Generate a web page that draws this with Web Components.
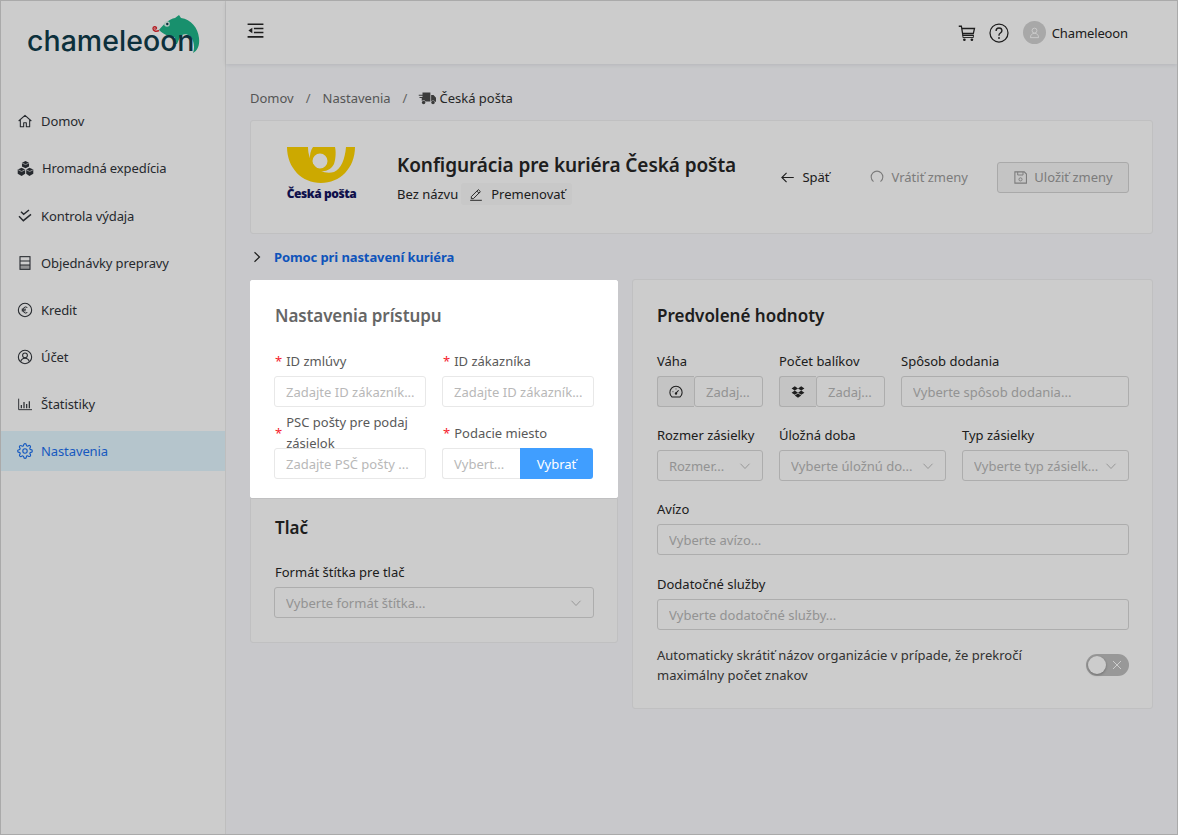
<!DOCTYPE html>
<html lang="sk"><head><meta charset="utf-8"><title>Chameleoon</title>
<style>html,body{margin:0;height:100%;background:#fafbfe}body{font-family:"Noto Sans",sans-serif;font-size:13px;color:#262626}</style>
</head><body>
<cr-app>
  <cr-sidebar slot="side">
    <cr-logo></cr-logo>
    <cr-nav-item icon="home">Domov</cr-nav-item>
    <cr-nav-item icon="cubes" wide>Hromadná expedícia</cr-nav-item>
    <cr-nav-item icon="checks">Kontrola výdaja</cr-nav-item>
    <cr-nav-item icon="orders">Objednávky prepravy</cr-nav-item>
    <cr-nav-item icon="euro">Kredit</cr-nav-item>
    <cr-nav-item icon="account">Účet</cr-nav-item>
    <cr-nav-item icon="stats">Štatistiky</cr-nav-item>
    <cr-nav-item icon="gear" active>Nastavenia</cr-nav-item>
  </cr-sidebar>
  <cr-topbar slot="top"></cr-topbar>
  <cr-breadcrumb></cr-breadcrumb>
  <cr-courier-head></cr-courier-head>
  <cr-help-row>Pomoc pri nastavení kuriéra</cr-help-row>
  <cr-columns>
    <div slot="left">
      <cr-card spot heading="Nastavenia prístupu">
        <cr-grid cols="152px 152px">
          <cr-field label="ID zmlúvy" required tight><cr-input text="Zadajte ID zákazník..."></cr-input></cr-field>
          <cr-field label="ID zákazníka" required tight><cr-input text="Zadajte ID zákazník..."></cr-input></cr-field>
          <cr-field label="PSC pošty pre podaj zásielok" required last><cr-input text="Zadajte PSČ pošty ..."></cr-input></cr-field>
          <cr-field label="Podacie miesto" required last><cr-picker text="Vybert..." action="Vybrať"></cr-picker></cr-field>
        </cr-grid>
      </cr-card>
      <cr-card heading="Tlač" compact>
        <cr-field label="Formát štítka pre tlač" last indent><cr-input select text="Vyberte formát štítka..."></cr-input></cr-field>
      </cr-card>
    </div>
    <cr-card slot="right" heading="Predvolené hodnoty" wide>
      <cr-grid cols="106px 106px 228px">
        <cr-field label="Váha"><cr-input addon="gauge" text="Zadaj..."></cr-input></cr-field>
        <cr-field label="Počet balíkov"><cr-input addon="dropbox" text="Zadaj..."></cr-input></cr-field>
        <cr-field label="Spôsob dodania"><cr-input text="Vyberte spôsob dodania..."></cr-input></cr-field>
      </cr-grid>
      <cr-grid cols="106px 167px 167px">
        <cr-field label="Rozmer zásielky"><cr-input select text="Rozmer..."></cr-input></cr-field>
        <cr-field label="Úložná doba"><cr-input select text="Vyberte úložnú do..."></cr-input></cr-field>
        <cr-field label="Typ zásielky"><cr-input select text="Vyberte typ zásielk..."></cr-input></cr-field>
      </cr-grid>
      <cr-field label="Avízo" extra><cr-input text="Vyberte avízo..."></cr-input></cr-field>
      <cr-field label="Dodatočné služby"><cr-input text="Vyberte dodatočné služby..."></cr-input></cr-field>
      <cr-switch-row>Automaticky skrátiť názov organizácie v prípade, že prekročí maximálny počet znakov</cr-switch-row>
    </cr-card>
  </cr-columns>
</cr-app>
<script>
const ICONS={
 home:'<path d="M2.500 12 12 3.500l9.500 8.500M5 10v10.500h5v-6h4v6h5V10" fill="none" stroke="currentColor" stroke-width="1.600" stroke-linejoin="round"/>',
 cubes:'<g fill="currentColor"><path d="M12 1.500 17 4v5l-5 2.500L7 9V4z"/><path d="M6.500 11 11.500 13.500v6L6.500 22.500 1 19.500v-6z"/><path d="M17.500 11 23 13.500v6l-5.500 3L13 19.500v-6z"/></g><g fill="none" stroke="#fff" stroke-width=".9"><path d="M7 4.200l5 2.300 5-2.300M1.500 13.700l5 2.500 5-2.500M13 13.700l5 2.500 5-2.500"/></g>',
 checks:'<path d="M6 5.500 10 9.500 18 3M3 12.500 9.500 19 21 9.500" fill="none" stroke="currentColor" stroke-width="2.200"/>',
 orders:'<rect x="4.500" y="2.500" width="15" height="19" fill="none" stroke="currentColor" stroke-width="1.600"/><path d="M4.500 9h15M4.500 15h15" stroke="currentColor" stroke-width="1.600"/><path d="M4.500 15h15v6.500h-15z" fill="currentColor" opacity=".35"/>',
 euro:'<circle cx="12" cy="12" r="10" fill="none" stroke="currentColor" stroke-width="1.600"/><path d="M15.500 8.200a4.500 4.500 0 1 0 0 7.600M7 10.800h6.500M7 13.200h6" fill="none" stroke="currentColor" stroke-width="1.500"/>',
 account:'<circle cx="12" cy="12" r="10" fill="none" stroke="currentColor" stroke-width="1.600"/><circle cx="12" cy="9.500" r="3.600" fill="none" stroke="currentColor" stroke-width="1.600"/><path d="M5.500 19c1-3.500 3.500-5 6.500-5s5.500 1.500 6.500 5" fill="none" stroke="currentColor" stroke-width="1.600"/>',
 stats:'<path d="M2.500 4v16.500h20" fill="none" stroke="currentColor" stroke-width="1.400"/><path d="M6.500 13.500v5M10.500 9v9.500M14.500 12v6.500M18.500 8v10.500" stroke="currentColor" stroke-width="1.800"/>',
 gear:'<circle cx="12" cy="12" r="3.300" fill="none" stroke="currentColor" stroke-width="1.700"/><path fill="none" stroke="currentColor" stroke-width="1.700" d="M19.400 15a1.650 1.650 0 0 0 .33 1.820l.06.06a2 2 0 0 1 0 2.830 2 2 0 0 1-2.830 0l-.06-.06a1.650 1.650 0 0 0-1.820-.33 1.650 1.650 0 0 0-1 1.510V21a2 2 0 0 1-2 2 2 2 0 0 1-2-2v-.09A1.650 1.650 0 0 0 9 19.400a1.650 1.650 0 0 0-1.820.33l-.06.06a2 2 0 0 1-2.830 0 2 2 0 0 1 0-2.830l.06-.06a1.650 1.650 0 0 0 .33-1.820 1.650 1.650 0 0 0-1.510-1H3a2 2 0 0 1-2-2 2 2 0 0 1 2-2h.09A1.650 1.650 0 0 0 4.600 9a1.650 1.650 0 0 0-.33-1.820l-.06-.06a2 2 0 0 1 0-2.830 2 2 0 0 1 2.830 0l.06.06a1.650 1.650 0 0 0 1.820.33H9a1.650 1.650 0 0 0 1-1.510V3a2 2 0 0 1 2-2 2 2 0 0 1 2 2v.09a1.650 1.650 0 0 0 1 1.510 1.650 1.650 0 0 0 1.820-.33l.06-.06a2 2 0 0 1 2.830 0 2 2 0 0 1 0 2.830l-.06.06a1.650 1.650 0 0 0-.33 1.820V9a1.650 1.650 0 0 0 1.510 1H21a2 2 0 0 1 2 2 2 2 0 0 1-2 2h-.09a1.650 1.650 0 0 0-1.510 1z"/>',
 menu:'<path d="M2 4h20M10 9.500h12M10 14.500h12M2 20h20" stroke="currentColor" stroke-width="2"/><path d="M3 12l5-3.500v7z" fill="currentColor"/>',
 cart:'<path d="M1 3h3.500l2 12h14.500M5 6h17l-1.500 6.500H6.200" fill="none" stroke="currentColor" stroke-width="1.700"/><path d="M6.500 15v3h14v-3" fill="none" stroke="currentColor" stroke-width="1.200"/><circle cx="8.500" cy="21" r="1.800" fill="currentColor"/><circle cx="18.500" cy="21" r="1.800" fill="currentColor"/>',
 help:'<circle cx="12" cy="12" r="10.800" fill="none" stroke="currentColor" stroke-width="1.500"/><path d="M8.500 9.500c0-2.200 1.600-3.500 3.500-3.500s3.500 1.300 3.500 3.300c0 2.700-3.500 2.700-3.500 5.200v.7" fill="none" stroke="currentColor" stroke-width="1.600"/><circle cx="12" cy="18" r="1.100" fill="currentColor"/>',
 user:'<circle cx="12" cy="8.500" r="4.500" fill="none" stroke="currentColor" stroke-width="1.700"/><path d="M4.500 21.500c0-5 3-8 7.500-8s7.500 3 7.500 8z" fill="none" stroke="currentColor" stroke-width="1.700"/>',
 truck:'<g fill="currentColor"><path d="M6 4.500h10.500v12H10a3 3 0 0 0-5-.5V12H2v-1.500h4V9H1V7.500h5z"/><path d="M17.500 8h3.200L24 11.500V17h-1.500a3 3 0 0 0-5-.5z"/><circle cx="7.500" cy="18" r="2.300"/><circle cx="20" cy="18" r="2.300"/></g>',
 pencil:'<path d="M4 16.500 16 4.500l3.500 3.500-12 12H4zM13.500 7l3.500 3.500" fill="none" stroke="currentColor" stroke-width="1.600"/><path d="M2 22.800h20" stroke="currentColor" stroke-width="1.600"/>',
 back:'<path d="M22 12H3M10.500 4.500 3 12l7.500 7.500" fill="none" stroke="currentColor" stroke-width="1.800"/>',
 undo:'<path d="M6 20C3.500 18 2 15 2 12 2 6.500 6.500 2 12 2s10 4.500 10 10c0 3-1.500 6-4 8" fill="none" stroke="currentColor" stroke-width="1.900"/>',
 save:'<path d="M3 3h15l3.500 3.500V21H3z" fill="none" stroke="currentColor" stroke-width="1.700"/><path d="M7.500 3v5h8.500V3" fill="none" stroke="currentColor" stroke-width="1.500"/><circle cx="12" cy="15" r="2.500" fill="none" stroke="currentColor" stroke-width="1.500"/>',
 gauge:'<path d="M5 20.500A10.500 10.500 0 1 1 19 20.500z" fill="none" stroke="currentColor" stroke-width="1.800"/><path d="M12 14l4.500-5" stroke="currentColor" stroke-width="1.800"/><circle cx="12" cy="14.500" r="2" fill="currentColor"/><path d="M6 11.500h1.500M12 6v1.500" stroke="currentColor" stroke-width="1.500"/>',
 dropbox:'<path fill="currentColor" d="M6.500 2 12 5.800 6.500 9.500 1 5.800zM17.500 2 23 5.800l-5.500 3.700L12 5.800zM1 13.200l5.500-3.700 5.500 3.700-5.500 3.700zM17.500 9.500l5.500 3.700-5.500 3.700L12 13.200zM6.500 18.200 12 14.500l5.500 3.700L12 22z"/>',
 down:'<path d="M3 7.500 12 17l9-9.500" fill="none" stroke="currentColor" stroke-width="1.500"/>',
 right:'<path d="M7 2.500l10 9.500-10 9.500" fill="none" stroke="currentColor" stroke-width="2.400"/>',
 cross:'<path d="M4 4l16 16M20 4 4 20" stroke="currentColor" stroke-width="2"/>'
};
function def(name,css,html,extra){
  const tpl=document.createElement('template');
  tpl.innerHTML='<style>*{box-sizing:border-box}:host{box-sizing:border-box}'+css+'</style>'+html;
  customElements.define(name,class extends HTMLElement{
    constructor(){super();this.attachShadow({mode:'open'}).appendChild(tpl.content.cloneNode(true));}
    connectedCallback(){if(extra)extra.call(this,this.shadowRoot);}
  });
}
def('cr-icon',':host{display:inline-flex;flex:none;width:var(--s,16px);height:var(--s,16px)}svg{width:100%;height:100%;display:block}','<svg viewBox="0 0 24 24"></svg>',function(r){
  const n=this.getAttribute('name'); if(n) r.querySelector('svg').innerHTML=ICONS[n]||'';
});
def('cr-app',`:host{display:grid;grid-template-columns:225px 1fr;grid-template-rows:63px 1fr;width:1178px;height:835px;border:1px solid #aaa;overflow:hidden;background:#fafbfe}
 ::slotted([slot=side]){grid-row:1/3}
 main{padding:23px 24px 0;min-width:0}`,'<slot name="side"></slot><slot name="top"></slot><main><slot></slot></main>');
def('cr-sidebar',':host{display:flex;flex-direction:column;background:#fff;border-right:1px solid #eee}','<slot></slot>');
def('cr-logo',`:host{display:block;position:relative;height:100px;flex:none}
 svg{position:absolute;left:143px;top:9px;width:65px;height:50px}
 span{position:absolute;left:26px;top:22px;font:500 28.5px/36px Inter,sans-serif;letter-spacing:.02px;color:#0f3d4c}`,
 `<svg viewBox="0 0 65 50"><path fill="#1fb589" d="M15 20C20 14 25 9 31 8L35 5 37 8C47 9 54 18 55 28 56 36 53 41 49 43 51 38 50 30 46 26 42 23 38 24 36 27L33 34H30L31 27C27 27 20 25 15 20Z"/><circle cx="23" cy="14" r="2.800" fill="#dff5ee"/><circle cx="23.300" cy="14" r="1.200" fill="#0f3d4c"/><path d="M15 20.500C12 22 9 21 9 18.500 9 16.500 12 16 12.500 18 12.500 19.500 10.500 19.500 10.800 18.300" fill="none" stroke="#e3262e" stroke-width="1.400"/></svg><span>chameleoon</span>`);
def('cr-nav-item',`:host{display:flex;align-items:center;gap:8px;height:40px;margin-bottom:7px;padding-left:16px;font-size:13px;letter-spacing:-.1px;color:#30343a}
 :host([wide]){margin-bottom:8px} :host([wide]) cr-icon{--s:17px}
 :host([active]){background:#e3f7ff;color:#1c70f0}`,'<cr-icon></cr-icon><span><slot></slot></span>',function(r){
  r.querySelector('cr-icon').shadowRoot.querySelector('svg').innerHTML=ICONS[this.getAttribute('icon')];
});
def('cr-topbar',`:host{display:flex;align-items:center;height:63px;background:#fff;box-shadow:0 1px 4px rgba(0,21,41,.1);padding:0 49px 0 20px;font-size:13px;color:#262626}
 .m{--s:19px;margin-top:-4px} .r{margin-left:auto;display:flex;align-items:center}
 .c{--s:18px} .h{--s:20px;margin-left:13px} .a{width:23px;height:23px;border-radius:50%;background:#d2d2d2;color:#fff;display:flex;align-items:center;justify-content:center;margin-left:14px;--s:13px}
 .n{margin-left:6px;letter-spacing:-.12px}`,
 `<cr-icon class="m" name="menu"></cr-icon><div class="r"><cr-icon class="c" name="cart"></cr-icon><cr-icon class="h" name="help"></cr-icon><div class="a"><cr-icon name="user"></cr-icon></div><span class="n">Chameleoon</span></div>`);
def('cr-breadcrumb',`:host{display:flex;align-items:center;height:22px;margin-bottom:11px;font-size:13px;color:#6b6b6b}
 i{font-style:normal;margin:0 12px;color:#7a7a7a} i.b2{margin-right:11px} b{font-weight:400;color:#303030} cr-icon{--s:18px;margin-right:3px;color:#4a4a4a}`,
 `<span>Domov</span><i>/</i><span>Nastavenia</span><i class="b2">/</i><cr-icon name="truck"></cr-icon><b>Česká pošta</b>`);
def('cr-courier-head',`:host{display:flex;align-items:center;height:114px;background:#fff;border:1px solid #f0f0f2;border-radius:3px;padding:0 23px 0 29px;font-size:13px;color:#262626}
 .logo{width:85px;height:65px;margin-top:-11px;margin-right:32px;flex:none;text-align:center}
 .logo svg{display:block;width:85px;height:45px}
 .logo div{font:800 12px/20px "Open Sans",sans-serif;letter-spacing:-.45px;color:#13145e;padding-right:2px;white-space:nowrap}
 h1{margin:0 0 3px;font-size:19px;line-height:30px;font-weight:600;color:#262626;white-space:nowrap;letter-spacing:-.08px}
 .sub{display:flex;align-items:center;height:22px}
 .pill{display:flex;align-items:center;gap:8px;width:111px;height:22px;margin-left:3px;padding:0 8px;background:#fafafa;border-radius:3px;--s:14px;white-space:nowrap}
 .acts{margin-left:auto;display:flex;align-items:center}
 .b{display:flex;align-items:center;gap:7px;--s:15px;white-space:nowrap}
 .off{color:#9b9b9b}
 .save{height:31px;width:132px;justify-content:center;gap:6px;background:#f5f5f5;border:1px solid #d4d4d4;border-radius:3px;margin-left:29px;--s:15px}
 .b.undo{margin-left:40px;--s:14px;gap:8px}`,
 `<div class="logo"><svg viewBox="0 0 85 45"><path fill="#ffd400" d="M7 8H28C28 24 40 37 54 33 61 30 65 20 66 8H75C75 29 60 44 41 44 22 44 7 29 7 8Z"/><path fill="#ffd400" fill-rule="evenodd" d="M33 8C28 15 29 27 37 31 44 34 51 31 54 25 56 19 56 12 55 8ZM40 14.500A7.500 7.500 0 1 0 40 29.500 7.500 7.500 0 1 0 40 14.500Z"/></svg><div>Česká pošta</div></div>
 <div><h1>Konfigurácia pre kuriéra Česká pošta</h1><div class="sub"><span>Bez názvu</span><span class="pill"><cr-icon name="pencil"></cr-icon>Premenovať</span></div></div>
 <div class="acts"><span class="b"><cr-icon name="back"></cr-icon>Späť</span><span class="b undo off"><cr-icon name="undo"></cr-icon>Vrátiť zmeny</span><span class="b save off"><cr-icon name="save"></cr-icon>Uložiť zmeny</span></div>`);
def('cr-help-row',`:host{display:flex;align-items:center;height:46px;font-size:13px;font-weight:700;letter-spacing:-.1px;color:#1269ea;padding-left:1px}
 cr-icon{--s:12px;color:#262626;margin-right:11px}`,'<cr-icon name="right"></cr-icon><span><slot></slot></span>');
def('cr-columns',`:host{display:grid;grid-template-columns:368px 521px;gap:14px;align-items:start}
 ::slotted([slot=right]){margin-top:-1px}`,'<slot name="left"></slot><slot name="right"></slot>');
def('cr-card',`:host{display:block;background:#fff;border:1px solid #f0f0f2;border-radius:3px;padding:21px 23px 18px}
 :host([spot]){position:relative;z-index:5;border-color:#fff;box-shadow:0 0 0 3000px rgba(0,0,0,.2);border-radius:2px}
 :host([spot]) h2{color:#666;letter-spacing:-.1px;padding-left:1px}
 :host([compact]){padding-bottom:24px;padding-top:15px;border-radius:0 0 3px 3px}
 :host([compact]) h2{margin-bottom:15px;padding-left:1px}
 :host([wide]){padding:22px 23px 23px 24px}
 h2{margin:0 0 16px;font-size:17px;line-height:28px;font-weight:600;color:#262626}`,'<h2></h2><slot></slot>',function(r){
  r.querySelector('h2').textContent=this.getAttribute('heading');
});
def('cr-grid',':host{display:grid;column-gap:16px}','<slot></slot>',function(){this.style.gridTemplateColumns=this.getAttribute('cols');});
def('cr-field',`:host{display:block;margin-bottom:13px;min-width:0;font-size:13px;color:#262626}
 :host([last]){margin-bottom:0}
 :host([tight]){margin-bottom:11px}
 :host([extra]){margin-bottom:14px}
 :host([indent]) .l{padding-left:1px}
 .l{display:flex;align-items:center;height:30px;line-height:21px}
 .r{display:none;color:#f5222d;margin-right:4px;flex:none;margin-left:1px}
 :host([required]) .r{display:inline}
 .c{position:relative}`,
 '<div class="l"><span class="r">*</span><span class="t"></span></div><div class="c"><slot></slot></div>',function(r){
  r.querySelector('.t').textContent=this.getAttribute('label');
  if(this.closest('cr-card[spot]')) r.querySelector('.l').style.color='#595959';
});
def('cr-input',`:host{display:flex;height:31px;font-size:13px;color:#b8b8b8;background:#fff}
 .a{display:none;width:37px;flex:none;background:#f5f5f5;border:1px solid #d9d9d9;border-right:0;border-radius:3px 0 0 3px;align-items:center;justify-content:center;color:#262626;--s:14px}
 .f{flex:1;min-width:0;display:flex;align-items:center;border:1px solid #d9d9d9;border-radius:3px;padding:0 11px;white-space:nowrap;overflow:hidden;gap:4px}
 .f span{flex:1;min-width:0;overflow:hidden}
 .d{display:none;--s:12px;color:#a8a8a8}
 :host([select]) .d{display:block}
 :host([addon]) .a{display:flex}`,
 '<div class="a"><cr-icon></cr-icon></div><div class="f"><span></span><cr-icon class="d" name="down"></cr-icon></div>',function(r){
  r.querySelector('span').textContent=this.getAttribute('text');
  const n=this.getAttribute('addon');
  if(n) r.querySelector('.a cr-icon').shadowRoot.querySelector('svg').innerHTML=ICONS[n];
  if(this.closest('cr-card[spot]')) r.querySelector('.f').style.borderColor='#e8e8e8';
});
def('cr-picker',`:host{display:flex;height:31px;font-size:13px}
 .f{width:78px;border:1px solid #e8e8e8;border-right:0;border-radius:3px 0 0 3px;padding:0 11px;display:flex;align-items:center;color:#b8b8b8;white-space:nowrap}
 .b{width:73px;background:#409eff;color:#fff;border-radius:0 3px 3px 0;display:flex;align-items:center;justify-content:center}`,
 '<div class="f"></div><div class="b"></div>',function(r){
  r.querySelector('.f').textContent=this.getAttribute('text');
  r.querySelector('.b').textContent=this.getAttribute('action');
});
def('cr-switch-row',`:host{display:flex;align-items:center;justify-content:space-between;margin-top:15px;font-size:13px;line-height:20px;color:#404040}
 .t{width:400px}
 .s{width:43px;height:22px;border-radius:11px;background:#bfbfbf;position:relative;display:flex;align-items:center;justify-content:flex-end;padding-right:6px;color:#fff;--s:12px;flex:none}
 .k{position:absolute;left:2px;top:2px;width:18px;height:18px;border-radius:50%;background:#fff;box-shadow:0 1px 3px rgba(0,0,0,.3)}`,
 '<div class="t"><slot></slot></div><div class="s"><span class="k"></span><cr-icon name="cross"></cr-icon></div>');
</script>
</body></html>
